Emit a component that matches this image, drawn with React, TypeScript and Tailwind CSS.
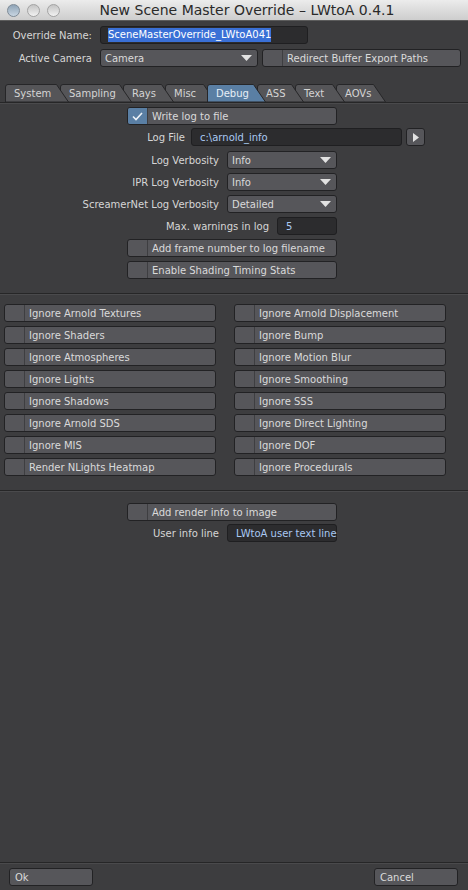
import React from 'react'

const font = { fontFamily: '"DejaVu Sans", "Liberation Sans", sans-serif' }

const tabs = [
  { label: 'System', adv: 55 },
  { label: 'Sampling', adv: 63 },
  { label: 'Rays', adv: 42 },
  { label: 'Misc', adv: 42 },
  { label: 'Debug', adv: 50, active: true },
  { label: 'ASS', adv: 38 },
  { label: 'Text', adv: 41 },
  { label: 'AOVs', adv: 41 },
]

const leftToggles = [
  'Ignore Arnold Textures',
  'Ignore Shaders',
  'Ignore Atmospheres',
  'Ignore Lights',
  'Ignore Shadows',
  'Ignore Arnold SDS',
  'Ignore MIS',
  'Render NLights Heatmap',
]

const rightToggles = [
  'Ignore Arnold Displacement',
  'Ignore Bump',
  'Ignore Motion Blur',
  'Ignore Smoothing',
  'Ignore SSS',
  'Ignore Direct Lighting',
  'Ignore DOF',
  'Ignore Procedurals',
]

function Tab({ label, adv, active, z }: { label: string; adv: number; active?: boolean; z: number }) {
  const w = adv + 9
  return (
    <div className="relative h-[18px] -mr-[9px] flex items-center" style={{ width: w, zIndex: active ? 50 : z }}>
      <svg className="absolute inset-0" width={w} height={18}>
        <path
          d={`M0.5 18 L0.5 3 Q0.5 0.5 3 0.5 L${w - 12.5} 0.5 L${w - 0.5} 18 Z`}
          fill={active ? '#5a7fa4' : '#555558'}
          stroke="#262628"
        />
      </svg>
      <span className={`relative pl-[9px] ${active ? 'text-[#e6eef6]' : 'text-[#d4d4d4]'}`}>{label}</span>
    </div>
  )
}

function Toggle({ label, checked, className = '' }: { label: string; checked?: boolean; className?: string }) {
  return (
    <div className={`flex h-[18px] rounded-[3px] border border-[#222224] bg-[#56565a] overflow-hidden ${className}`}>
      <div className={`w-[20px] shrink-0 border-r border-[#3e3e41] flex items-center justify-center ${checked ? 'bg-[#5a7fa4]' : ''}`}>
        {checked && (
          <svg width="11" height="9" viewBox="0 0 11 9">
            <path d="M1 4.5 L4 7.5 L10 1" fill="none" stroke="#eef3f8" strokeWidth="1.6" />
          </svg>
        )}
      </div>
      <div className="pl-[4px] flex items-center text-[#dadada] whitespace-nowrap">{label}</div>
    </div>
  )
}

function Dropdown({ value, className = '' }: { value: string; className?: string }) {
  return (
    <div className={`flex items-center justify-between h-[18px] rounded-[3px] border border-[#222224] bg-[#56565a] pl-[4px] pr-[5px] text-[#dadada] ${className}`}>
      <span>{value}</span>
      <svg width="11" height="6" viewBox="0 0 11 6">
        <path d="M0 0 H11 L5.5 6 Z" fill="#e2e2e2" />
      </svg>
    </div>
  )
}

function Field({ value, className = '' }: { value: string; className?: string }) {
  return (
    <div className={`flex items-center h-[18px] rounded-[3px] border border-[#1f1f21] bg-[#2c2c2e] pl-[8px] text-[#a9c9f2] whitespace-nowrap ${className}`}>
      {value}
    </div>
  )
}

function Separator({ className = '' }: { className?: string }) {
  return (
    <div className={className}>
      <div className="h-px bg-[#262627]" />
      <div className="h-px bg-[#4a4a4c]" />
    </div>
  )
}

export default function App() {
  return (
    <div className="w-[468px] h-[890px] bg-[#3d3d3f] flex flex-col text-[10px] overflow-hidden" style={font}>
      {/* title bar */}
      <div className="relative h-[21px] shrink-0 bg-gradient-to-b from-[#ececec] to-[#cdcdcd] border-b border-[#5c5c5c] flex items-center justify-center">
        <div className="absolute left-[7px] top-[4px] flex gap-[7px]">
          <div className="w-[13px] h-[13px] rounded-full border border-[#7d8a96] bg-gradient-to-b from-[#8ea3b6] to-[#c9d6e2]" />
          <div className="w-[13px] h-[13px] rounded-full border border-[#a3a3a3] bg-gradient-to-b from-[#c4c4c4] to-[#f2f2f2]" />
          <div className="w-[13px] h-[13px] rounded-full border border-[#a3a3a3] bg-gradient-to-b from-[#c4c4c4] to-[#f2f2f2]" />
        </div>
        <span className="text-[14px] text-[#2a2a2a] ml-[26px]">New Scene Master Override – LWtoA 0.4.1</span>
      </div>

      {/* header fields */}
      <div className="flex items-center mt-[5px] text-[#d6d6d6]">
        <div className="w-[92px] text-right">Override Name:</div>
        <div className="ml-[8px] w-[208px] h-[18px] rounded-[3px] border border-[#1f1f21] bg-[#2c2c2e] flex items-center pl-[7px]">
          <span className="bg-[#3a70d6] text-white leading-[14px]">SceneMasterOverride_LWtoA041</span>
        </div>
      </div>
      <div className="flex items-center mt-[5px] text-[#d6d6d6]">
        <div className="w-[92px] text-right">Active Camera</div>
        <Dropdown value="Camera" className="ml-[8px] w-[158px]" />
        <Toggle label="Redirect Buffer Export Paths" className="ml-[4px] w-[199px]" />
      </div>

      {/* tabs */}
      <div className="mt-[17px] pl-[5px] flex">
        {tabs.map((t, i) => (
          <Tab key={t.label} label={t.label} adv={t.adv} active={t.active} z={20 - i} />
        ))}
      </div>
      <Separator />

      {/* debug panel */}
      <div className="flex flex-col text-[#d6d6d6]">
        <Toggle label="Write log to file" checked className="mt-[3px] ml-[127px] w-[210px]" />
        <div className="flex items-center mt-[3px]">
          <div className="w-[185px] text-right">Log File</div>
          <Field value="c:\arnold_info" className="ml-[6px] w-[211px]" />
          <div className="ml-[4px] w-[19px] h-[18px] rounded-[3px] border border-[#222224] bg-[#56565a] flex items-center justify-center">
            <svg width="6" height="9" viewBox="0 0 6 9">
              <path d="M0 0 L6 4.5 L0 9 Z" fill="#e2e2e2" />
            </svg>
          </div>
        </div>
        <div className="flex items-center mt-[5px]">
          <div className="w-[219px] text-right">Log Verbosity</div>
          <Dropdown value="Info" className="ml-[8px] w-[110px]" />
        </div>
        <div className="flex items-center mt-[4px]">
          <div className="w-[219px] text-right">IPR Log Verbosity</div>
          <Dropdown value="Info" className="ml-[8px] w-[110px]" />
        </div>
        <div className="flex items-center mt-[4px]">
          <div className="w-[219px] text-right">ScreamerNet Log Verbosity</div>
          <Dropdown value="Detailed" className="ml-[8px] w-[110px]" />
        </div>
        <div className="flex items-center mt-[4px]">
          <div className="w-[269px] text-right">Max. warnings in log</div>
          <Field value="5" className="ml-[8px] w-[60px]" />
        </div>
        <Toggle label="Add frame number to log filename" className="mt-[4px] ml-[127px] w-[210px]" />
        <Toggle label="Enable Shading Timing Stats" className="mt-[4px] ml-[127px] w-[210px]" />
      </div>

      <Separator className="mt-[14px]" />

      <div className="mt-[9px] ml-[4px] grid grid-cols-[212px_212px] gap-x-[18px] gap-y-[4px]">
        {leftToggles.map((l, i) => (
          <React.Fragment key={l}>
            <Toggle label={l} />
            <Toggle label={rightToggles[i]} />
          </React.Fragment>
        ))}
      </div>

      <Separator className="mt-[14px]" />

      <div className="flex flex-col text-[#d6d6d6]">
        <Toggle label="Add render info to image" className="mt-[11px] ml-[127px] w-[210px]" />
        <div className="flex items-center mt-[3px]">
          <div className="w-[219px] text-right">User info line</div>
          <Field value="LWtoA user text line" className="ml-[8px] w-[110px]" />
        </div>
      </div>

      <div className="flex-1" />

      <Separator />
      <div className="flex justify-between px-[9px] pt-[4px] pb-[4px] h-[26px]">
        <div className="w-[84px] h-[18px] rounded-[3px] border border-[#222224] bg-[#56565a] pl-[5px] flex items-center text-[#dadada]">Ok</div>
        <div className="w-[84px] h-[18px] rounded-[3px] border border-[#222224] bg-[#56565a] pl-[5px] flex items-center text-[#dadada] mr-[1px]">Cancel</div>
      </div>
    </div>
  )
}
